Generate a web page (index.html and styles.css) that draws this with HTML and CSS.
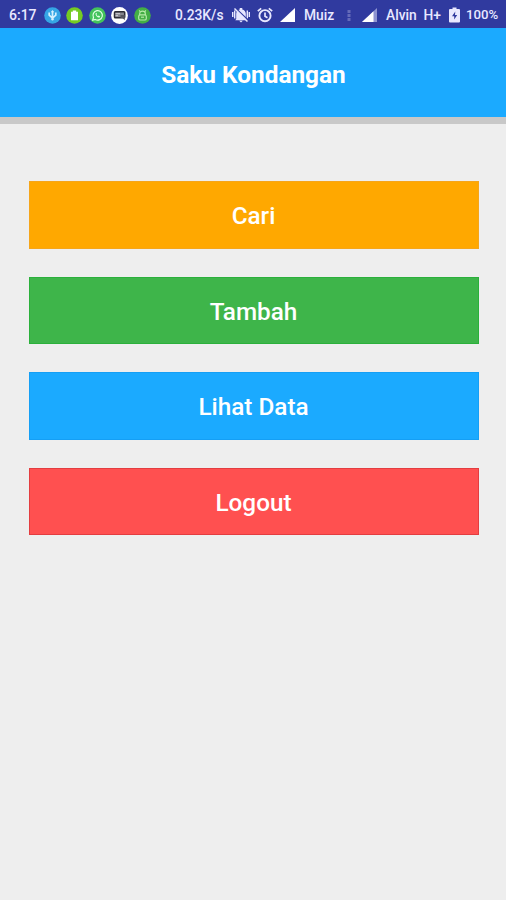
FILE: index.html
```html
<!DOCTYPE html>
<html lang="id">
<head>
  <meta charset="UTF-8">
  <title>Saku Kondangan</title>
  <link rel="stylesheet" href="styles.css">
</head>
<body>
  <div class="statusbar">
    <span class="time">6:17</span>
    <div class="notifications">
      <svg width="17" height="17" viewBox="0 0 17 17">
        <circle cx="8.5" cy="8.5" r="8.3" fill="#35a5e5"/>
        <path d="M8.5 4v8M5.2 5.5v2.7l3.3 3 3.3-3V5.5" fill="none" stroke="#d3f0ff" stroke-width="1.7"/>
        <path d="M6.8 5.2L8.5 3l1.7 2.2z" fill="#d3f0ff"/>
        <circle cx="8.5" cy="12.3" r="1.2" fill="#d3f0ff"/>
      </svg>
      <svg width="17" height="17" viewBox="0 0 17 17">
        <circle cx="8.5" cy="8.5" r="8.3" fill="#75cb22"/>
        <path d="M5 4.8h1.8V3.5h3.4v1.3H12v8.4H5z" fill="#fff"/>
      </svg>
      <svg width="17" height="17" viewBox="0 0 17 17">
        <circle cx="8.5" cy="8.5" r="8.3" fill="#43c35b"/>
        <path d="M3.7 13.2l.8-2.7a4.7 4.7 0 1 1 1.8 1.9z" fill="none" stroke="#e0ffe5" stroke-width="1.2"/>
        <path d="M6.7 6.2c-.8 1.8 1.8 4.6 4 4.3l.3-1.2-1.4-.7-.7.6-1.4-1.5.5-.7-.6-1.3z" fill="#e0ffe5"/>
      </svg>
      <svg width="17" height="17" viewBox="0 0 17 17">
        <circle cx="8.5" cy="8.5" r="8.4" fill="#fff"/>
        <rect x="3.5" y="4.8" width="10.2" height="6" rx=".8" fill="#85858d" stroke="#2c2c34" stroke-width="1.5"/>
        <path d="M4.5 6.7h4.5M4.5 8.7h2.5" stroke="#d0d0d6" stroke-width="1"/>
        <path d="M9.5 8h4.3v5.2L11.5 11h-2z" fill="#55555e"/>
      </svg>
      <svg width="17" height="17" viewBox="0 0 17 17">
        <circle cx="8.5" cy="8.5" r="8.3" fill="#43ae45"/>
        <path d="M5.2 3.3l1.2 1.5M11.8 3.3l-1.2 1.5" stroke="#b5eaa8" stroke-width="1.1"/>
        <path d="M5.7 8V6.5a2.8 2.3 0 0 1 5.6 0V8" fill="none" stroke="#b5eaa8" stroke-width="1.2"/>
        <rect x="4.7" y="7.8" width="7.6" height="5.2" rx="1.6" fill="none" stroke="#b5eaa8" stroke-width="1.2"/>
        <path d="M7 10.2h3" stroke="#b5eaa8" stroke-width="1.2"/>
      </svg>
    </div>
    <span class="speed">0.23K/s</span>
    <svg class="bell" width="18" height="16" viewBox="0 0 18 16">
      <path d="M4.2 12V6.8a4.8 4.8 0 0 1 3.5-4.3V1h2.6v1.5a4.8 4.8 0 0 1 3.5 4.3V12l1 1.2H3.2zM7.2 13.8h3.6L9 15.6z" fill="#e8e8ff"/>
      <path d="M2.7 3.5v8M.7 5v5M15.3 3.5v8M17.3 5v5" stroke="#e8e8ff" stroke-width="1.4"/>
      <path d="M4 1.5l12.5 12" stroke="#303a9f" stroke-width="1.2"/>
      <path d="M2.5 1.5l13 13" stroke="#e8e8ff" stroke-width="1.5"/>
    </svg>
    <svg class="alarm" width="16" height="16" viewBox="0 0 16 16">
      <circle cx="8" cy="8.7" r="5.6" fill="none" stroke="#e8e8ff" stroke-width="1.9"/>
      <path d="M.8 4.2L4.2 1.3M15.2 4.2l-3.4-2.9M8 5.6v3.6l2.5 1.5" fill="none" stroke="#e8e8ff" stroke-width="1.7"/>
    </svg>
    <svg class="signal" width="15" height="14" viewBox="0 0 15 14">
      <path d="M0 14L15 0v14z" fill="#fff"/>
    </svg>
    <span class="carrier">Muiz</span>
    <svg class="dots" width="4" height="11" viewBox="0 0 4 11">
      <path d="M.5 0h3v3h-3zM.5 4h3v3h-3zM.5 8h3v3h-3z" fill="#656bb9"/>
    </svg>
    <svg class="signal-two" width="15" height="14" viewBox="0 0 15 14">
      <path d="M0 14L15 0v14z" fill="#8e93d0"/>
      <path d="M0 14L11.5 3.3V14z" fill="#fff"/>
    </svg>
    <span class="carrier-two">Alvin</span>
    <span class="network">H+</span>
    <svg class="battery" width="11" height="16" viewBox="0 0 11 16">
      <path d="M1 2h2.5V.5h4V2H10q1 0 1 1v11.5q0 1-1 1H1q-1 0-1-1V3q0-1 1-1z" fill="#e8e8ff"/>
      <path d="M6.3 4.5L3 9.3h2.2v3.2L8.2 8H6z" fill="#303a9f"/>
    </svg>
    <span class="percent">100%</span>
  </div>

  <div class="header">
    <h1>Saku Kondangan</h1>
  </div>

  <div class="menu">
    <button class="cari">Cari</button>
    <button class="tambah">Tambah</button>
    <button class="lihat">Lihat Data</button>
    <button class="logout">Logout</button>
  </div>
</body>
</html>
```

FILE: styles.css
```css
body {
  margin: 0;
  min-height: 900px;
  background-color: #eee;
  font-family: Roboto, "Liberation Sans", sans-serif;
}

.statusbar {
  display: flex;
  align-items: center;
  box-sizing: border-box;
  height: 28px;
  padding: 2px 0 0 9px;
  background-color: #303a9f;
  color: #e8e8ff;
  font-size: 13.8px;
  font-weight: 500;
  line-height: 16px;
  white-space: nowrap;
}

.statusbar span,
.statusbar svg {
  flex: none;
}

.time {
  width: 34.5px;
  font-size: 14px;
}

.notifications {
  display: flex;
  gap: 5.5px;
  width: 131.5px;
}

.speed {
  width: 57px;
}

.bell {
  margin-right: 7px;
}

.alarm {
  margin-right: 7px;
}

.signal {
  margin-right: 9px;
}

.carrier {
  width: 42.5px;
}

.dots {
  margin-right: 11.5px;
}

.signal-two {
  margin-right: 9px;
}

.carrier-two {
  width: 37.5px;
}

.network {
  width: 25.5px;
}

.battery {
  margin-right: 6px;
}

.percent {
  font-size: 13.2px;
}

.header {
  display: flex;
  align-items: center;
  justify-content: center;
  height: 89px;
  border-bottom: 7px solid #c8c8c8;
  background-color: #1baaff;
}

h1 {
  margin: 3px 0 0 1px;
  color: #fff;
  font-size: 24.4px;
  font-weight: 700;
}

.menu {
  display: flex;
  flex-direction: column;
  gap: 28px;
  padding: 57px 27.5px 0 28.5px;
}

button {
  box-sizing: border-box;
  height: 67.6px;
  padding: 2px 0 0;
  border: 1px solid;
  color: #fff;
  font-family: inherit;
  font-size: 24.3px;
  font-weight: 500;
  cursor: pointer;
}

.cari {
  border-color: #f5a51a;
  background-color: #ffa800;
}

.tambah {
  border-color: #2bb03b;
  background-color: #3eb54a;
}

.lihat {
  border-color: #159ff5;
  background-color: #1baaff;
}

.logout {
  border-color: #e33d40;
  background-color: #ff5050;
}
```
